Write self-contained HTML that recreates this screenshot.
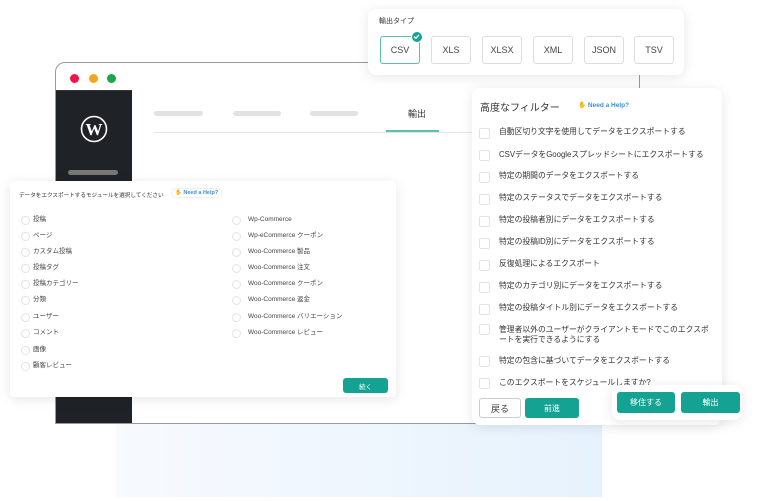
<!DOCTYPE html>
<html><head><meta charset="utf-8"><style>
*{margin:0;padding:0;box-sizing:border-box}
body{width:768px;height:501px;background:#fff;position:relative;overflow:hidden;font-family:"Liberation Sans","Noto Sans CJK JP",sans-serif;color:#333}
.abs{position:absolute}
.grad{left:116px;top:423px;width:486px;height:74px;background:linear-gradient(90deg,#f7fafe,#e6f2fd)}
.win{left:55px;top:62px;width:585px;height:362px;border:1.5px solid #999;border-radius:10px 10px 0 0;background:#fff;overflow:hidden}
.dot{width:9px;height:9px;border-radius:50%;top:11px}
.side{left:0;top:27px;width:76px;height:340px;background:#1f2327;border-top:1.5px solid #333}
.bar{height:5px;background:#e2e2e2;border-radius:3px}
.card{background:#fff;border-radius:8px;box-shadow:0 2px 12px rgba(0,0,0,.10)}
.fbtn{top:27px;width:40px;height:28px;border:1.5px solid #ddd;border-radius:3px;font-size:9px;color:#444;display:flex;align-items:center;justify-content:center}
.cb{width:11px;height:11px;border:1px solid #e3e3e3;border-radius:2px;left:7px}
.ft{left:27px;font-size:7.8px;color:#333;line-height:10px}
.rd{width:9px;height:9px;border:1px solid #e3e3e3;border-radius:50%}
.mt{font-size:6.5px;color:#444;line-height:8px}
.btn{background:#14a392;color:#fff;border-radius:3px;display:flex;align-items:center;justify-content:center;font-size:8px}
.help{font-size:6.5px;color:#3a8fd8;font-weight:bold}
</style></head><body>
<div class="abs grad"></div>
<div class="abs win">
 <div class="abs dot" style="left:14px;background:#f0144d"></div>
 <div class="abs dot" style="left:33px;background:#f7a619"></div>
 <div class="abs dot" style="left:51px;background:#1aa64a"></div>
 <div class="abs side">
  <svg class="abs" style="left:24px;top:24px" width="28" height="28" viewBox="0 0 28 28"><circle cx="14" cy="14" r="12.5" fill="none" stroke="#fff" stroke-width="1.6"/><text x="14" y="20" text-anchor="middle" font-family="Liberation Serif" font-size="17" font-weight="bold" fill="#fff">W</text></svg>
  <div class="abs bar" style="left:12px;top:79px;width:50px;background:#777"></div>
 </div>
 <div class="abs bar" style="left:98px;top:48px;width:49px"></div>
 <div class="abs bar" style="left:177px;top:48px;width:48px"></div>
 <div class="abs bar" style="left:254px;top:48px;width:48px"></div>
 <div class="abs" style="left:352px;top:44px;font-size:9px;color:#333">輸出</div>
 <div class="abs" style="left:98px;top:69px;width:330px;height:1px;background:#e5e5e5"></div>
 <div class="abs" style="left:330px;top:67px;width:53px;height:2px;background:#5bbfb0"></div>
</div>
<!-- export type -->
<div class="abs card" style="left:368px;top:9px;width:316px;height:66px">
 <div class="abs" style="left:11px;top:7px;font-size:7px;color:#333">輸出タイプ</div>
 <div class="abs fbtn" style="left:12px;border-color:#5bbfb0">CSV</div>
 <div class="abs" style="left:43px;top:22px;width:12px;height:12px;border-radius:50%;background:#14a392;border:1.5px solid #fff"><svg width="9" height="9" viewBox="0 0 9 9" style="position:absolute;left:0;top:0"><path d="M2 4.5l1.8 1.8L7 3" fill="none" stroke="#fff" stroke-width="1.3"/></svg></div>
 <div class="abs fbtn" style="left:63px">XLS</div>
 <div class="abs fbtn" style="left:114px">XLSX</div>
 <div class="abs fbtn" style="left:165px">XML</div>
 <div class="abs fbtn" style="left:216px">JSON</div>
 <div class="abs fbtn" style="left:266px">TSV</div>
</div>
<!-- filter -->
<div class="abs card" style="left:472px;top:88px;width:250px;height:337px">
 <div class="abs" style="left:8px;top:11px;font-size:10px;color:#333">高度なフィルター</div>
 <div class="abs help" style="left:106px;top:13px">✋ Need a Help?</div>
 <div class="abs cb" style="top:40px"></div><div class="abs ft" style="top:39px">自動区切り文字を使用してデータをエクスポートする</div>
 <div class="abs cb" style="top:62px"></div><div class="abs ft" style="top:62px">CSVデータをGoogleスプレッドシートにエクスポートする</div>
 <div class="abs cb" style="top:84px"></div><div class="abs ft" style="top:83px">特定の期間のデータをエクスポートする</div>
 <div class="abs cb" style="top:106px"></div><div class="abs ft" style="top:105px">特定のステータスでデータをエクスポートする</div>
 <div class="abs cb" style="top:128px"></div><div class="abs ft" style="top:127px">特定の投稿者別にデータをエクスポートする</div>
 <div class="abs cb" style="top:150px"></div><div class="abs ft" style="top:149px">特定の投稿ID別にデータをエクスポートする</div>
 <div class="abs cb" style="top:172px"></div><div class="abs ft" style="top:171px">反復処理によるエクスポート</div>
 <div class="abs cb" style="top:194px"></div><div class="abs ft" style="top:193px">特定のカテゴリ別にデータをエクスポートする</div>
 <div class="abs cb" style="top:216px"></div><div class="abs ft" style="top:215px">特定の投稿タイトル別にデータをエクスポートする</div>
 <div class="abs cb" style="top:236px"></div><div class="abs ft" style="top:237px;width:212px">管理者以外のユーザーがクライアントモードでこのエクスポートを実行できるようにする</div>
 <div class="abs cb" style="top:268px"></div><div class="abs ft" style="top:268px">特定の包含に基づいてデータをエクスポートする</div>
 <div class="abs cb" style="top:290px"></div><div class="abs ft" style="top:290px">このエクスポートをスケジュールしますか?</div>
 <div class="abs" style="left:7px;top:310px;width:42px;height:20px;border:1px solid #ccc;border-radius:3px;font-size:9px;display:flex;align-items:center;justify-content:center">戻る</div>
 <div class="abs btn" style="left:53px;top:310px;width:54px;height:20px">前進</div>
</div>
<div class="abs card" style="left:612px;top:385px;width:130px;height:35px">
 <div class="abs btn" style="left:5px;top:7px;width:58px;height:21px">移住する</div>
 <div class="abs btn" style="left:69px;top:7px;width:59px;height:21px">輸出</div>
</div>
<!-- module -->
<div class="abs card" style="left:10px;top:181px;width:386px;height:216px;border-radius:4px">
 <div class="abs" style="left:9px;top:10px;font-size:5.6px;color:#333;white-space:nowrap">データをエクスポートするモジュールを選択してください</div>
 <div class="abs help" style="left:161px;top:7px;border:1px solid #eee;border-radius:6px;padding:1px 3px;font-size:5.5px;background:#fff">✋ Need a Help?</div>
 <div class="abs rd" style="left:11px;top:35px"></div><div class="abs mt" style="left:23px;top:35px">投稿</div>
 <div class="abs rd" style="left:11px;top:51px"></div><div class="abs mt" style="left:23px;top:51px">ページ</div>
 <div class="abs rd" style="left:11px;top:67px"></div><div class="abs mt" style="left:23px;top:67px">カスタム投稿</div>
 <div class="abs rd" style="left:11px;top:83px"></div><div class="abs mt" style="left:23px;top:83px">投稿タグ</div>
 <div class="abs rd" style="left:11px;top:99px"></div><div class="abs mt" style="left:23px;top:99px">投稿カテゴリー</div>
 <div class="abs rd" style="left:11px;top:115px"></div><div class="abs mt" style="left:23px;top:115px">分類</div>
 <div class="abs rd" style="left:11px;top:132px"></div><div class="abs mt" style="left:23px;top:132px">ユーザー</div>
 <div class="abs rd" style="left:11px;top:148px"></div><div class="abs mt" style="left:23px;top:148px">コメント</div>
 <div class="abs rd" style="left:11px;top:165px"></div><div class="abs mt" style="left:23px;top:165px">画像</div>
 <div class="abs rd" style="left:11px;top:181px"></div><div class="abs mt" style="left:23px;top:181px">顧客レビュー</div>
 <div class="abs rd" style="left:222px;top:35px"></div><div class="abs mt" style="left:238px;top:35px">Wp-Commerce</div>
 <div class="abs rd" style="left:222px;top:51px"></div><div class="abs mt" style="left:238px;top:51px">Wp-eCommerce クーポン</div>
 <div class="abs rd" style="left:222px;top:67px"></div><div class="abs mt" style="left:238px;top:67px">Woo-Commerce 製品</div>
 <div class="abs rd" style="left:222px;top:83px"></div><div class="abs mt" style="left:238px;top:83px">Woo-Commerce 注文</div>
 <div class="abs rd" style="left:222px;top:99px"></div><div class="abs mt" style="left:238px;top:99px">Woo-Commerce クーポン</div>
 <div class="abs rd" style="left:222px;top:115px"></div><div class="abs mt" style="left:238px;top:115px">Woo-Commerce 返金</div>
 <div class="abs rd" style="left:222px;top:132px"></div><div class="abs mt" style="left:238px;top:132px">Woo-Commerce バリエーション</div>
 <div class="abs rd" style="left:222px;top:148px"></div><div class="abs mt" style="left:238px;top:148px">Woo-Commerce レビュー</div>
 <div class="abs btn" style="left:333px;top:197px;width:45px;height:15px;font-size:6.5px">続く</div>
</div>
</body></html>
